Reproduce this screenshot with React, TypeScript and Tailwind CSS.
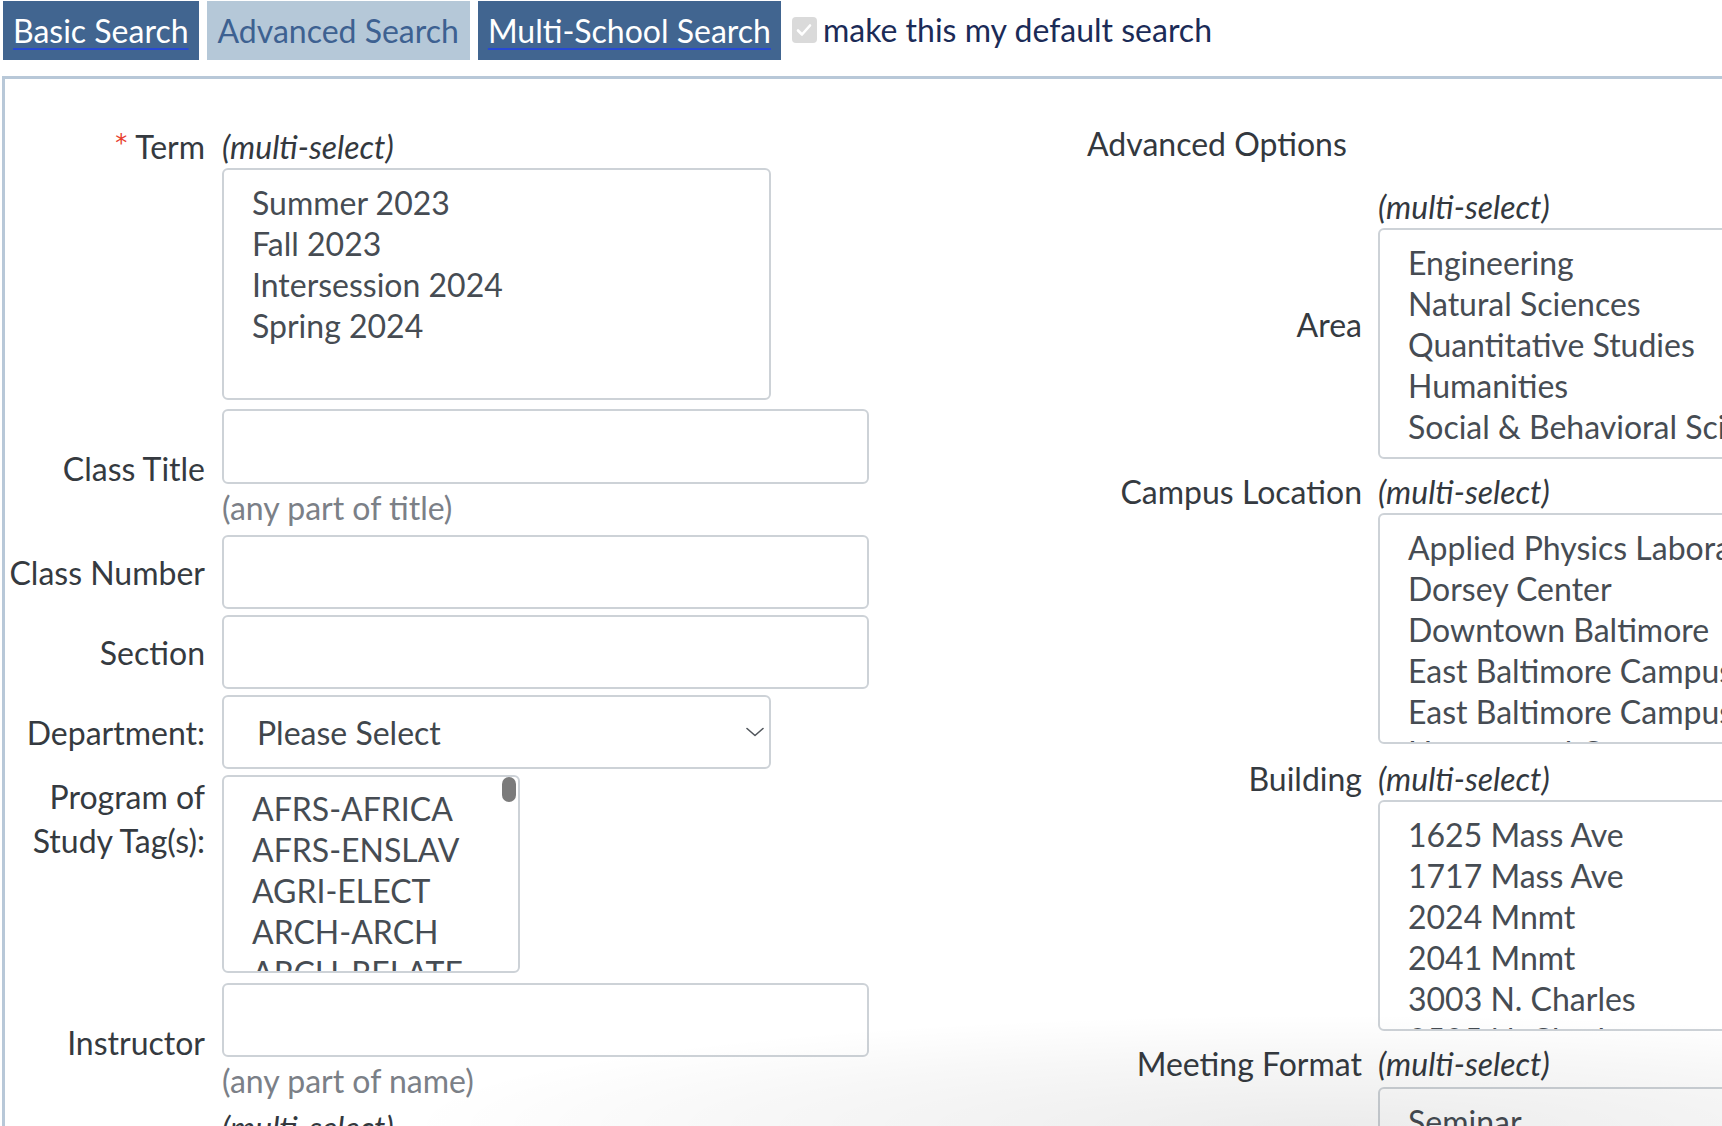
import React from "react";

const terms = ["Summer 2023", "Fall 2023", "Intersession 2024", "Spring 2024"];
const tags = ["AFRS-AFRICA", "AFRS-ENSLAV", "AGRI-ELECT", "ARCH-ARCH", "ARCH-RELATE"];
const areas = ["Engineering", "Natural Sciences", "Quantitative Studies", "Humanities", "Social & Behavioral Sciences"];
const campuses = [
  "Applied Physics Laboratory",
  "Dorsey Center",
  "Downtown Baltimore",
  "East Baltimore Campus",
  "East Baltimore Campus - Other",
  "Homewood Campus",
];
const buildings = ["1625 Mass Ave", "1717 Mass Ave", "2024 Mnmt", "2041 Mnmt", "3003 N. Charles", "3505 N. Charles"];
const formats = ["Seminar", "Lecture", "Lab"];

function MultiHint() {
  return <div className="italic leading-[41px] text-[#33383e]">(multi-select)</div>;
}

function ListBox({ items, className }: { items: string[]; className: string }) {
  return (
    <div
      className={`relative overflow-hidden rounded-[6px] border-2 border-[#cdd2d7] bg-white pl-[28px] pt-[12px] text-[#464c53] ${className}`}
    >
      {items.map((item) => (
        <div key={item} className="whitespace-nowrap leading-[41px]">
          {item}
        </div>
      ))}
    </div>
  );
}

function TextBox({ className = "w-[647px]" }: { className?: string }) {
  return <div className={`h-[74px] rounded-[6px] border-2 border-[#cdd2d7] bg-white ${className}`} />;
}

function Hint({ children }: { children: React.ReactNode }) {
  return <div className="mt-[3px] leading-[41px] text-[#7b8087]">{children}</div>;
}

export default function App() {
  return (
    <div className="relative h-[1126px] w-[1722px] overflow-hidden bg-white font-['Lato','Open_Sans',sans-serif] text-[32px] text-[#353a40]">
      {/* tabs */}
      <div className="mt-[1px] flex h-[59px] items-stretch">
        <div className="ml-[3px] flex items-center bg-[#416590] px-[10px] text-white">
          <span className="leading-[40px] underline decoration-[#2749d4] decoration-2 underline-offset-[5px]">Basic Search</span>
        </div>
        <div className="ml-[8px] flex items-center bg-[#b5c8d8] px-[11px] text-[#3d6191]">
          <span className="leading-[40px]">Advanced Search</span>
        </div>
        <div className="ml-[8px] flex items-center bg-[#416590] px-[10px] text-white">
          <span className="leading-[40px] underline decoration-[#2749d4] decoration-2 underline-offset-[5px]">Multi-School Search</span>
        </div>
        <div className="ml-[11px] flex items-center gap-[6px] pb-[2px]">
          <div className="flex h-[26px] w-[25px] items-center justify-center rounded-[4px] bg-[#dadada]">
            <svg width="16" height="14" viewBox="0 0 16 14" fill="none">
              <path d="M2 7.5 L6 11.5 L14 2.5" stroke="white" strokeWidth="2.6" strokeLinecap="round" strokeLinejoin="round" />
            </svg>
          </div>
          <span className="leading-[40px] text-[#1b2b57]">make this my default search</span>
        </div>
      </div>

      {/* panel */}
      <div className="ml-[2px] mt-[16px] h-[2000px] w-[2300px] border-[3px] border-[#b8c8d8]">
        <div className="flex items-start">
          {/* left column */}
          <div className="flex w-[864px] shrink-0 flex-col pt-[47px]">
            <div className="flex gap-[17px]">
              <div className="flex w-[200px] shrink-0 justify-end leading-[41px]">
                <span className="mr-[8px] mt-[5px] font-['DejaVu_Sans',sans-serif] text-[24px] leading-none text-[#e8402f]">*</span>
                <span>Term</span>
              </div>
              <div>
                <MultiHint />
                <ListBox items={terms} className="mt-[1px] h-[232px] w-[549px]" />
              </div>
            </div>

            <div className="mt-[9px] flex gap-[17px]">
              <div className="flex w-[200px] shrink-0 items-center justify-end leading-[41px]">Class Title</div>
              <div>
                <div className="h-[75px] w-[647px] rounded-[6px] border-2 border-[#cdd2d7]" />
                <Hint>(any part of title)</Hint>
              </div>
            </div>

            <div className="mt-[7px] flex gap-[17px]">
              <div className="flex w-[200px] shrink-0 items-center justify-end leading-[41px]">Class Number</div>
              <TextBox />
            </div>

            <div className="mt-[6px] flex gap-[17px]">
              <div className="flex w-[200px] shrink-0 items-center justify-end leading-[41px]">Section</div>
              <TextBox />
            </div>

            <div className="mt-[6px] flex gap-[17px]">
              <div className="flex w-[200px] shrink-0 items-center justify-end leading-[41px]">Department:</div>
              <div className="flex h-[74px] w-[549px] items-center justify-between rounded-[6px] border-2 border-[#cdd2d7] pl-[33px] pr-[4px] text-[#40464c]">
                <span className="leading-[41px]">Please Select</span>
                <svg width="20" height="10" viewBox="0 0 20 10" fill="none">
                  <path d="M2 1.5 L10 8.5 L18 1.5" stroke="#50555b" strokeWidth="1.6" strokeLinecap="round" strokeLinejoin="round" />
                </svg>
              </div>
            </div>

            <div className="mt-[6px] flex gap-[17px]">
              <div className="w-[200px] shrink-0 text-right leading-[44px]">
                Program of
                <br />
                Study Tag(s):
              </div>
              <div className="relative">
                <ListBox items={tags} className="h-[198px] w-[298px] !pt-[11px]" />
                <div className="absolute right-[4px] top-[2px] h-[25px] w-[14px] rounded-full bg-[#7b7b7b]" />
              </div>
            </div>

            <div className="mt-[10px] flex gap-[17px]">
              <div className="flex w-[200px] shrink-0 items-center justify-end leading-[41px]">Instructor</div>
              <div>
                <TextBox />
                <Hint>(any part of name)</Hint>
              </div>
            </div>

            <div className="mt-[6px] flex gap-[17px]">
              <div className="w-[200px] shrink-0" />
              <MultiHint />
            </div>
          </div>

          {/* right column */}
          <div className="ml-[218px] flex shrink-0 flex-col pt-[44px]">
            <div className="leading-[41px] text-[#33383e]">Advanced Options</div>

            <div className="mt-[22px] flex gap-[16px]">
              <div className="flex w-[275px] shrink-0 items-center justify-end pt-[4px] leading-[41px]">Area</div>
              <div>
                <MultiHint />
                <ListBox items={areas} className="mt-[1px] h-[231px] w-[549px]" />
              </div>
            </div>

            <div className="mt-[12px] flex gap-[16px]">
              <div className="w-[275px] shrink-0 text-right leading-[41px]">Campus Location</div>
              <div>
                <MultiHint />
                <ListBox items={campuses} className="mt-[1px] h-[231px] w-[549px]" />
              </div>
            </div>

            <div className="mt-[14px] flex gap-[16px]">
              <div className="w-[275px] shrink-0 text-right leading-[41px]">Building</div>
              <div>
                <MultiHint />
                <ListBox items={buildings} className="mt-[1px] h-[231px] w-[549px]" />
              </div>
            </div>

            <div className="mt-[12px] flex gap-[16px]">
              <div className="w-[275px] shrink-0 text-right leading-[41px]">Meeting Format</div>
              <div>
                <MultiHint />
                <ListBox items={formats} className="mt-[3px] h-[231px] w-[549px]" />
              </div>
            </div>
          </div>
        </div>
      </div>

      {/* soft shadow fading in at the bottom edge */}
      <div className="pointer-events-none absolute bottom-0 right-0 h-[110px] w-[1300px] bg-[radial-gradient(ellipse_at_70%_100%,rgba(0,0,0,0.075),rgba(0,0,0,0.03)_45%,transparent_72%)]" />
    </div>
  );
}
